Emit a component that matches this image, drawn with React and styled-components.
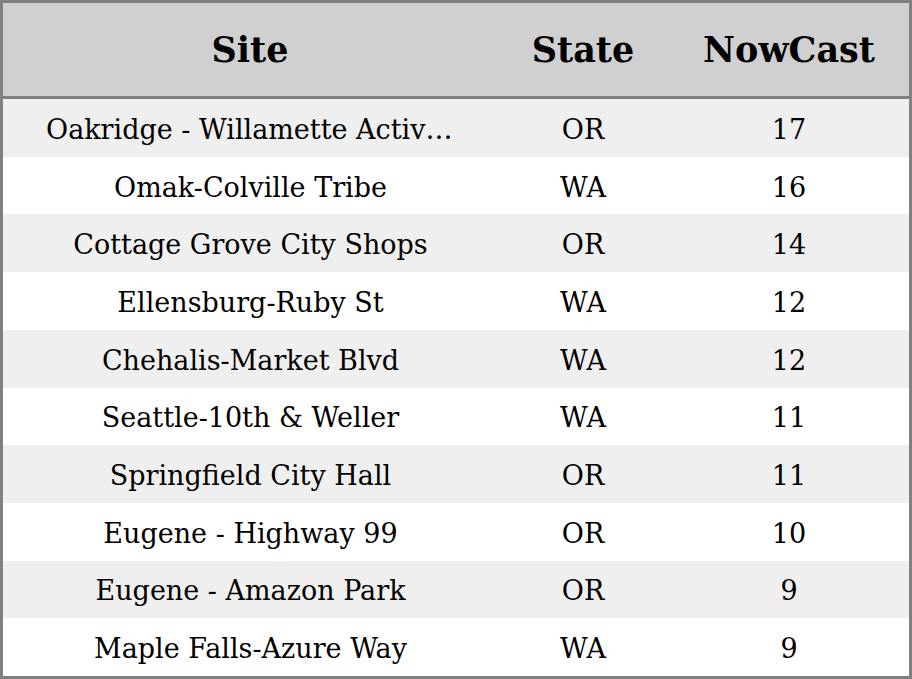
import React from 'react';
import styled, { createGlobalStyle } from 'styled-components';

const GlobalStyle = createGlobalStyle`
  html, body {
    margin: 0;
    padding: 0;
    background: #ffffff;
  }
  body {
    font-family: "DejaVu Serif", serif;
    color: #000;
  }
`;

const Table = styled.div`
  box-sizing: border-box;
  width: 912px;
  height: 679px;
  border: 3px solid #808080;
  display: grid;
  grid-template-rows: 96px repeat(10, 1fr);
  overflow: hidden;
`;

const Row = styled.div`
  display: grid;
  grid-template-columns: 494px 172px 240px;
  align-items: center;
  background: ${p => (p.$head ? '#d0d0d0' : p.$shade ? '#efefef' : '#ffffff')};
  border-bottom: ${p => (p.$head ? '3px solid #808080' : 'none')};
`;

const HeadCell = styled.div`
  text-align: center;
  font-size: 35px;
  font-weight: bold;
`;

const Cell = styled.div`
  text-align: center;
  font-size: 27px;
  padding: 3px ${p => (p.$wide ? '42px 0 43px' : '0 0')};
  white-space: nowrap;
  overflow: hidden;
  text-overflow: ellipsis;
`;

const rows = [
  ['Oakridge - Willamette Active Club', 'OR', 17],
  ['Omak-Colville Tribe', 'WA', 16],
  ['Cottage Grove City Shops', 'OR', 14],
  ['Ellensburg-Ruby St', 'WA', 12],
  ['Chehalis-Market Blvd', 'WA', 12],
  ['Seattle-10th & Weller', 'WA', 11],
  ['Springfield City Hall', 'OR', 11],
  ['Eugene - Highway 99', 'OR', 10],
  ['Eugene - Amazon Park', 'OR', 9],
  ['Maple Falls-Azure Way', 'WA', 9],
];

export default function App() {
  return (
    <>
      <GlobalStyle />
      <Table>
        <Row $head>
          <HeadCell>Site</HeadCell>
          <HeadCell>State</HeadCell>
          <HeadCell>NowCast</HeadCell>
        </Row>
        {rows.map(([site, state, val], i) => (
          <Row key={site} $shade={i % 2 === 0}>
            <Cell $wide>{site}</Cell>
            <Cell>{state}</Cell>
            <Cell>{val}</Cell>
          </Row>
        ))}
      </Table>
    </>
  );
}
